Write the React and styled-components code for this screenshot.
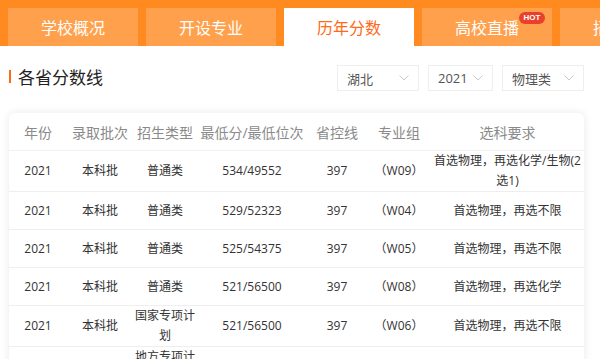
import React from "react";
import styled, { createGlobalStyle } from "styled-components";

const Global = createGlobalStyle`
  html, body { margin: 0; padding: 0; overflow: hidden; background: #fff; }
  body { font-family: "Open Sans", "Noto Sans CJK SC", sans-serif; }
`;

const Page = styled.div`
  width: 600px;
  height: 359px;
  overflow: hidden;
  background: #fff;
`;

const TabBar = styled.div`
  display: flex;
  gap: 8px;
  padding: 8px 0 0 8px;
  height: 38px;
  background: #ff8b20;
  white-space: nowrap;
`;

const Tab = styled.div`
  position: relative;
  flex: 0 0 130px;
  height: 38px;
  display: flex;
  align-items: center;
  justify-content: center;
  font-family: "Noto Sans CJK SC", sans-serif;
  font-size: 16px;
  color: ${(p) => (p.$active ? "#ff6a17" : "#fff")};
  background: ${(p) => (p.$active ? "#fff" : "#ffa04c")};
`;

const Hot = styled.span`
  position: absolute;
  left: 97px;
  top: 4px;
  width: 26px;
  height: 12px;
  border-radius: 6px;
  background: #e8402c;
  color: #fff;
  font-family: "Liberation Sans", sans-serif;
  font-weight: 700;
  font-size: 8px;
  line-height: 12px;
  text-align: center;
`;

const Section = styled.div`
  padding: 19px 16px 0 9px;
`;

const HeadRow = styled.div`
  display: flex;
  align-items: center;
  height: 26px;
`;

const Title = styled.div`
  flex: 1;
  display: flex;
  align-items: center;
  gap: 7px;
  font-family: "Noto Sans CJK SC", sans-serif;
  font-size: 17px;
  color: #222;
  margin-top: -3px;
`;

const Mark = styled.span`
  width: 2px;
  height: 13px;
  background: #ff6a17;
`;

const Selects = styled.div`
  display: flex;
  gap: 9px;
`;

const Select = styled.div`
  box-sizing: border-box;
  width: ${(p) => p.$w}px;
  height: 26px;
  border: 1px solid #eee;
  display: flex;
  align-items: center;
  justify-content: space-between;
  padding: 0 9px 0 9px;
  font-size: 13px;
  color: #555;
`;

const Chevron = () => (
  <svg width="10" height="6" viewBox="0 0 10 6">
    <polyline points="0.5,0.5 5,5 9.5,0.5" fill="none" stroke="#c8c8c8" strokeWidth="1" />
  </svg>
);

const Card = styled.div`
  margin-top: 22px;
  background: #fff;
  border-radius: 6px;
  box-shadow: 0 0 10px rgba(0, 0, 0, 0.09);
  overflow: hidden;
`;

const Table = styled.table`
  width: 100%;
  table-layout: fixed;
  border-collapse: collapse;
`;

const Th = styled.th`
  height: 37px;
  padding: 0;
  font-weight: 400;
  font-size: 14px;
  color: #8a8a8a;
  text-align: center;
  border-bottom: 1px solid #f0f0f0;
  white-space: nowrap;
`;

const Td = styled.td`
  height: 37px;
  padding: 0;
  font-size: 12px;
  line-height: 20px;
  color: #333;
  text-align: center;
  vertical-align: middle;
  border-bottom: 1px solid #eee;
`;

const cols = [58, 66, 64, 110, 60, 64, null];
const heads = ["年份", "录取批次", "招生类型", "最低分/最低位次", "省控线", "专业组", "选科要求"];
const rows = [
  ["2021", "本科批", "普通类", "534/49552", "397", "（W09）", "首选物理，再选化学/生物(2选1)"],
  ["2021", "本科批", "普通类", "529/52323", "397", "（W04）", "首选物理，再选不限"],
  ["2021", "本科批", "普通类", "525/54375", "397", "（W05）", "首选物理，再选不限"],
  ["2021", "本科批", "普通类", "521/56500", "397", "（W08）", "首选物理，再选化学"],
  ["2021", "本科批", "国家专项计划", "521/56500", "397", "（W06）", "首选物理，再选不限"],
  ["2021", "本科批", "地方专项计划", "521/56500", "397", "（W06）", "首选物理，再选不限"],
];

const tabs = ["学校概况", "开设专业", "历年分数", "高校直播", "招生计划"];

export default function App() {
  return (
    <Page>
      <Global />
      <TabBar>
        {tabs.map((t, i) => (
          <Tab key={t} $active={i === 2}>
            {t}
            {i === 3 && <Hot>HOT</Hot>}
          </Tab>
        ))}
      </TabBar>
      <Section>
        <HeadRow>
          <Title>
            <Mark />
            各省分数线
          </Title>
          <Selects>
            <Select $w={82}>湖北<Chevron /></Select>
            <Select $w={65}>2021<Chevron /></Select>
            <Select $w={82}>物理类<Chevron /></Select>
          </Selects>
        </HeadRow>
        <Card>
          <Table>
            <colgroup>
              {cols.map((w, i) => (
                <col key={i} style={w ? { width: w } : undefined} />
              ))}
            </colgroup>
            <thead>
              <tr>
                {heads.map((h) => (
                  <Th key={h}>{h}</Th>
                ))}
              </tr>
            </thead>
            <tbody>
              {rows.map((r, i) => (
                <tr key={i}>
                  {r.map((c, j) => (
                    <Td key={j}>{c}</Td>
                  ))}
                </tr>
              ))}
            </tbody>
          </Table>
        </Card>
      </Section>
    </Page>
  );
}
